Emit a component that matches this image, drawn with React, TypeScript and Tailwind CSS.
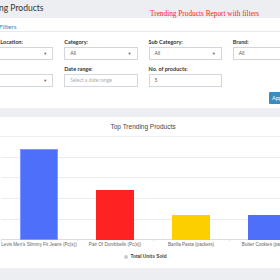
import React from "react";

const labelCls = "block text-[5.5px] leading-[7px] font-bold text-[#333] whitespace-nowrap";
const boxCls =
  "h-[13px] w-full border border-[#d2d6de] bg-white flex items-center justify-between px-[5px] text-[5px] text-[#555]";

function SelectBox({ value }: { value: string }) {
  return (
    <div className={boxCls}>
      <span>{value}</span>
      <span className="text-[4px] text-[#666]">▼</span>
    </div>
  );
}

function Field({ label, indent, children }: { label: string; indent?: boolean; children: React.ReactNode }) {
  return (
    <div className="flex flex-col gap-[1px]">
      <label className={indent ? labelCls + " pl-[6px]" : labelCls}>{label}</label>
      {children}
    </div>
  );
}

const bars = [
  { label: "Levis Men's Slimmy Fit Jeans (Pc(s))", top: 12, color: "#4d6ffa" },
  { label: "Pair Of Dumbbells (Pc(s))", top: 53, color: "#ff2222" },
  { label: "Barilla Pasta (packets)", top: 78, color: "#fcd000" },
  { label: "Butter Cookies (packets)", top: 78, color: "#4d6ffa" },
];

export default function App() {
  return (
    <div className="w-[280px] h-[280px] overflow-hidden bg-[#eceef2] font-['Lato',sans-serif]">
      <div className="w-[334px] ml-[-24px]">
        {/* page header */}
        <div className="relative h-[18px]">
          <h1 className="pt-[3px] text-[8.5px] leading-[11px] text-[#333] whitespace-nowrap">Trending Products</h1>
          <span className="absolute left-[174px] top-[9px] font-['Liberation_Serif',serif] text-[7.3px] leading-[10px] text-[#ff1a1a] whitespace-nowrap">
            Trending Products Report with filters
          </span>
        </div>

        {/* filters card */}
        <div className="h-[90px] bg-white">
          <div className="h-[14px] border-b border-[#e6e9ee] pl-[23px] text-[6.5px] leading-[18px] text-[#3c8dbc]">
            Filters
          </div>
          <div className="px-[4px] pt-[7px]">
            <div className="grid grid-cols-4 gap-x-[11px] gap-y-[6px]">
              <Field label="Store Location:" indent>
                <SelectBox value="" />
              </Field>
              <Field label="Category:">
                <SelectBox value="All" />
              </Field>
              <Field label="Sub Category:">
                <SelectBox value="All" />
              </Field>
              <Field label="Brand:">
                <SelectBox value="All" />
              </Field>
              <Field label="Store:">
                <SelectBox value="" />
              </Field>
              <Field label="Date range:">
                <div className={boxCls}>
                  <span className="text-[#aaa]">Select a date range</span>
                </div>
              </Field>
              <Field label="No. of products:">
                <div className={boxCls}>
                  <span>5</span>
                </div>
              </Field>
            </div>
            <div className="flex justify-end mt-[5px]">
              <button className="h-[12px] w-[37px] rounded-[1px] bg-[#3c8dbc] text-[5.5px] text-white text-left pl-[3px]">
                Apply
              </button>
            </div>
          </div>
        </div>

        {/* chart card */}
        <div className="mt-[9px] h-[151px] bg-white">
          <div className="h-[20px] border-b border-[#eceef0] flex items-center justify-center text-[6.5px] text-[#444] font-['Liberation_Sans',sans-serif]">
            Top Trending Products
          </div>
          <div className="pl-[25px]">
            <svg width="304" height="104" viewBox="0 0 304 104" className="block">
              {[20, 40, 61, 82].map((y) => (
                <line key={y} x1="0" x2="304" y1={y + 0.5} y2={y + 0.5} stroke="#ececec" strokeWidth="1" />
              ))}
              <line x1="0" x2="304" y1="102.5" y2="102.5" stroke="#dcdcdc" strokeWidth="1" />
              {[0, 76, 152, 228].map((x) => (
                <line key={x} x1={x + 0.5} x2={x + 0.5} y1="102" y2="104" stroke="#dcdcdc" />
              ))}
              {bars.map((b, i) => (
                <rect
                  key={i}
                  x={i * 76 + 19.5}
                  y={b.top + 0.5}
                  width="37"
                  height={102 - b.top}
                  fill={b.color}
                  stroke={i === 0 ? "#7f98ff" : b.color}
                  strokeWidth="1"
                />
              ))}
            </svg>
            <div className="flex font-['Liberation_Sans',sans-serif]">
              {bars.map((b, i) => (
                <div key={i} className="w-[76px] shrink-0 text-center text-[4.6px] leading-[8px] text-[#666] whitespace-nowrap">
                  {b.label}
                </div>
              ))}
            </div>
          </div>
          <div className="mt-[4px] flex items-center justify-center gap-[2px] pl-[5px] font-['Liberation_Sans',sans-serif]">
            <span className="w-[4px] h-[4px] rounded-full bg-[#c9cbd3]" />
            <span className="text-[4.8px] font-bold text-[#444]">Total Units Sold</span>
          </div>
        </div>
      </div>
    </div>
  );
}
